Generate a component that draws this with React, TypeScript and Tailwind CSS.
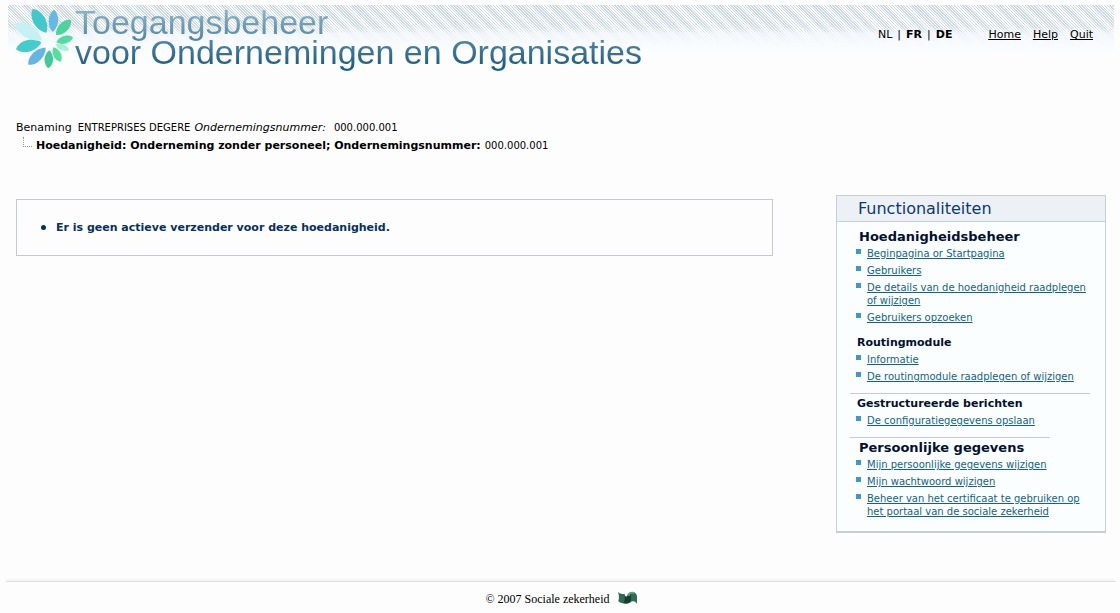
import type { ReactNode } from "react";

const petals: { tip: [number, number]; base: [number, number]; w: number; fill: string }[] = [
  { tip: [98, 27], base: [139, 98], w: 27, fill: "#3fc9cb" },
  { tip: [162, 29], base: [158, 96], w: 21, fill: "#66b9e6" },
  { tip: [213, 60], base: [168, 105], w: 21, fill: "#4ed39d" },
  { tip: [219, 112], base: [169, 127], w: 17, fill: "#51dca0" },
  { tip: [207, 150], base: [167, 133], w: 13, fill: "#a4f0cf" },
  { tip: [182, 185], base: [160, 142], w: 17, fill: "#55df9c" },
  { tip: [145, 205], base: [148, 151], w: 19, fill: "#43c99a" },
  { tip: [85, 194], base: [137, 143], w: 22, fill: "#62b5e5" },
  { tip: [48, 148], base: [124, 127], w: 26, fill: "#43cccb" },
  { tip: [45, 70], base: [126, 120], w: 28, fill: "#c5f1f5" },
];

function petalPath(tip: [number, number], base: [number, number], w: number) {
  const dx = base[0] - tip[0];
  const dy = base[1] - tip[1];
  const len = Math.hypot(dx, dy);
  const nx = (-dy / len) * w * 0.9;
  const ny = (dx / len) * w * 0.9;
  const at = (t: number, s: number) => `${tip[0] + dx * t + nx * s} ${tip[1] + dy * t + ny * s}`;
  return `M${at(0, 0)} C${at(0.2, 1)} ${at(0.75, 1)} ${at(1, 0)} C${at(0.75, -1)} ${at(0.2, -1)} ${at(0, 0)}Z`;
}

function Flower() {
  return (
    <svg viewBox="45 24 177 183" className="mt-px h-[61px] w-[59px] shrink-0" aria-hidden="true">
      {petals.map((p) => (
        <path key={p.fill} d={petalPath(p.tip, p.base, p.w)} fill={p.fill} />
      ))}
    </svg>
  );
}

function MenuList({ items }: { items: string[] }) {
  return (
    <ul className="flex flex-col gap-1 pl-[19px] pr-[14px] text-[10px] leading-[13px]">
      {items.map((item) => (
        <li key={item} className="flex items-start gap-[6px]">
          <span className="mt-[2px] size-[5px] shrink-0 bg-[#4196cf]" />
          <a href="#" className="text-[#126482] underline">
            {item}
          </a>
        </li>
      ))}
    </ul>
  );
}

function Heading({ large, children }: { large?: boolean; children: ReactNode }) {
  return large ? (
    <h3 className="pl-[22px] text-[13px] leading-5 font-bold text-[#04102e]">{children}</h3>
  ) : (
    <h3 className="pl-5 text-[11px] leading-5 font-bold text-[#04102e]">{children}</h3>
  );
}

export default function App() {
  return (
    <div className="flex min-h-screen flex-col bg-[#fdfdfd] font-['DejaVu_Sans',sans-serif] text-[11px] text-black">
      <header className="pt-[5px] pr-[6px] pl-2">
        <div className="flex justify-between bg-[linear-gradient(to_bottom,rgba(248,251,254,0)_0px,rgba(248,251,254,0.15)_22px,rgba(248,251,254,0.75)_29px,rgba(249,252,255,1)_42px,#fdfdfd_50px),repeating-linear-gradient(45deg,#ccd7e2_0px,#ccd7e2_1px,#fbfcfd_1px,#fbfcfd_2px)] pr-[21px]">
          <div className="flex pt-[2px] pl-[7px]">
            <Flower />
            <h1 className="bg-linear-to-b from-[#93b9ca] to-[#1c6088] to-85% bg-clip-text pb-2 pl-px font-['Liberation_Sans',sans-serif] text-[34px] leading-[30px] text-transparent">
              Toegangsbeheer
              <br />
              voor Ondernemingen en Organisaties
            </h1>
          </div>
          <nav className="flex gap-9 pt-[22px] leading-4">
            <div className="flex gap-[5px]">
              <span>NL</span>|<a href="#" className="font-bold">FR</a>|
              <a href="#" className="font-bold">DE</a>
            </div>
            <div className="flex gap-3 underline">
              <a href="#">Home</a>
              <a href="#">Help</a>
              <a href="#">Quit</a>
            </div>
          </nav>
        </div>
      </header>

      <section className="px-4 pt-11 leading-[18px]">
        <p className="flex">
          <span>Benaming</span>
          <span className="ml-[6px] text-[10px]">ENTREPRISES DEGERE</span>
          <em className="ml-1">Ondernemingsnummer:</em>
          <span className="ml-2 text-[10px]">000.000.001</span>
        </p>
        <p className="flex pl-[7px]">
          <span className="mr-1 h-[10px] w-[9px] border-b border-l border-dotted border-[#999999]" />
          <strong>Hoedanigheid: Onderneming zonder personeel; Ondernemingsnummer:</strong>
          <span className="ml-1 text-[10px]">000.000.001</span>
        </p>
      </section>

      <main className="flex items-start gap-[63px] pt-10 pr-[14px] pb-12 pl-4">
        <ul className="mt-1 flex-1 border border-[#c8c8d4] px-6 py-[18px] font-bold text-[#053061]">
          <li className="flex items-center gap-[10px] leading-[19px]">
            <span className="size-[5px] rounded-full bg-[#053061]" />
            Er is geen actieve verzender voor deze hoedanigheid.
          </li>
        </ul>
        <aside className="w-[270px] border border-b-2 border-[#c5cfda] bg-[#fafefe] pb-[13px]">
          <h2 className="border-b border-[#c5cfda] bg-[#edf1f6] pl-[21px] text-base leading-[25px] text-[#0a3a70]">
            Functionaliteiten
          </h2>
          <div className="pt-[5px]">
            <Heading large>Hoedanigheidsbeheer</Heading>
            <MenuList
              items={[
                "Beginpagina or Startpagina",
                "Gebruikers",
                "De details van de hoedanigheid raadplegen of wijzigen",
                "Gebruikers opzoeken",
              ]}
            />
          </div>
          <div className="pt-[9px]">
            <Heading>Routingmodule</Heading>
            <MenuList items={["Informatie", "De routingmodule raadplegen of wijzigen"]} />
          </div>
          <hr className="mt-[10px] mr-[15px] ml-[13px] border-[#c8c8d8]" />
          <Heading>Gestructureerde berichten</Heading>
          <MenuList items={["De configuratiegegevens opslaan"]} />
          <hr className="mt-[10px] mr-[55px] ml-[13px] border-[#c8c8d8]" />
          <Heading large>Persoonlijke gegevens</Heading>
          <MenuList
            items={[
              "Mijn persoonlijke gegevens wijzigen",
              "Mijn wachtwoord wijzigen",
              "Beheer van het certificaat te gebruiken op het portaal van de sociale zekerheid",
            ]}
          />
        </aside>
      </main>

      <footer className="mx-[6px] mr-1 flex items-center justify-center gap-2 border-t border-[#dedede] pt-2 font-['Liberation_Serif',serif] text-xs leading-[18px] shadow-[0_-3px_2px_-1px_#f3f3f3]">
        © 2007 Sociale zekerheid
        <svg viewBox="0 0 57 40" className="mb-[2px] h-[14px] w-[19px]" aria-hidden="true">
          <path d="M0 2C5 7 12 9 20 7L21 14C24 18 28 17 29 12C31 5 37 1 43 1C51 2 56 7 57 14V38C54 32 50 29 44 30L39 31C34 37 22 39 14 36C9 35 4 33 1 29C4 20 3 11 0 2Z" fill="#2f6b54" />
          <path d="M20 12C24 18 28 17 29 11L39 10V28C34 36 23 38 16 34C21 28 21 20 20 12Z" fill="#163f31" />
          <path d="M28 9C33 2 44 0 51 5L47 7C38 5 35 8 36 13L29 13Z" fill="#68a389" />
        </svg>
      </footer>
    </div>
  );
}
